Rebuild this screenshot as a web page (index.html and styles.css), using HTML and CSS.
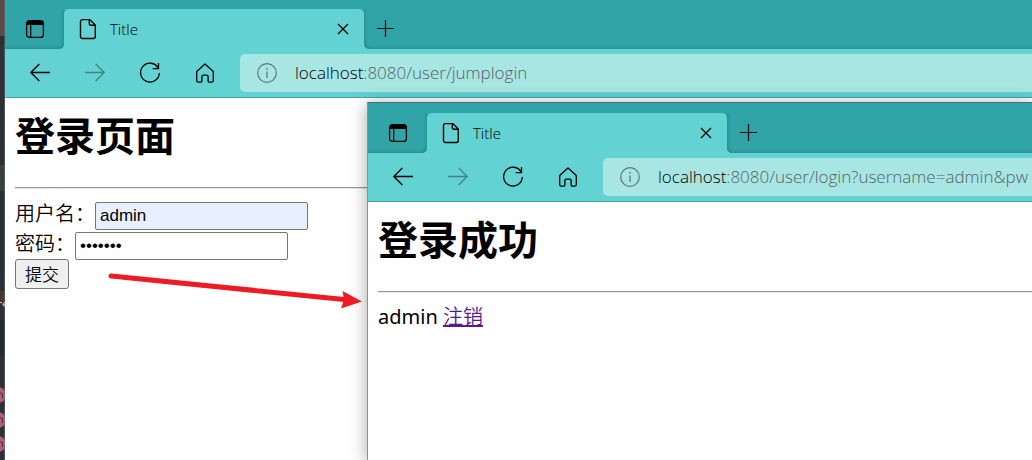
FILE: index.html
```html
<!DOCTYPE html>
<html lang="zh-CN">
<head>
<meta charset="utf-8">
<title>Title</title>
<link rel="stylesheet" href="styles.css">
</head>
<body>
<svg class="sprite" aria-hidden="true">
  <symbol id="i-panel" viewBox="0 0 20 20"><rect x="1.6" y="1.6" width="16.8" height="16.8" rx="3" fill="none" stroke="currentColor" stroke-width="1.3"/><path d="M1.5 6V4.5a3 3 0 0 1 3-3h11a3 3 0 0 1 3 3V6z" fill="currentColor"/><path d="M5.7 6v12.400" stroke="currentColor" stroke-width="1.200"/></symbol>
  <symbol id="i-file" viewBox="0 0 18 22"><path d="M3.500 1.600h7.200L16.300 7v11.500a2 2 0 0 1-2 2H3.500a2 2 0 0 1-2-2v-15a2 2 0 0 1 2-1.900zM10.300 1.800v3.800a1.600 1.600 0 0 0 1.600 1.600h4.200" fill="none" stroke="currentColor" stroke-width="1.400" stroke-linejoin="round"/></symbol>
  <symbol id="i-close" viewBox="0 0 12 12"><path d="M1 1l10 10M11 1L1 11" stroke="currentColor" stroke-width="1.300"/></symbol>
  <symbol id="i-plus" viewBox="0 0 18 18"><path d="M8.500 0v17M0 8.500h17" stroke="currentColor" stroke-width="1.200"/></symbol>
  <symbol id="i-back" viewBox="0 0 22 20"><path d="M21 9.500H2M10.300 1L1.800 9.500l8.500 8.500" fill="none" stroke="currentColor" stroke-width="1.300"/></symbol>
  <symbol id="i-forward" viewBox="0 0 22 20"><path d="M1 9.500h19M11.700 1l8.500 8.500-8.500 8.500" fill="none" stroke="currentColor" stroke-width="1.300"/></symbol>
  <symbol id="i-reload" viewBox="0 0 22 22"><path d="M19.200 6A9.400 9.400 0 1 0 20.400 11M19.500 1v5.700h-5.800" fill="none" stroke="currentColor" stroke-width="1.300"/></symbol>
  <symbol id="i-home" viewBox="0 0 20 22"><path d="M1.700 9.600L10 1.900l8.300 7.700v9a1.500 1.500 0 0 1-1.500 1.500h-2.700a1 1 0 0 1-1-1v-4.500a1.500 1.500 0 0 0-1.500-1.500H8.400a1.500 1.500 0 0 0-1.500 1.500v4.500a1 1 0 0 1-1 1H3.200a1.500 1.500 0 0 1-1.500-1.500z" fill="none" stroke="currentColor" stroke-width="1.300" stroke-linejoin="round"/></symbol>
  <symbol id="i-info" viewBox="0 0 20 20"><circle cx="10" cy="10" r="9.300" fill="none" stroke="currentColor" stroke-width="1.200"/><path d="M10 8.500v6.500M10 5v1.700" stroke="currentColor" stroke-width="1.300"/></symbol>
</svg>

<div class="desktop">
  <svg class="backdrop" width="5" height="460" aria-hidden="true">
    <path fill="#5a4a4c" d="M0 0h5v36H0z"/><path fill="#2d3036" d="M0 36h5v424H0z"/>
    <path fill="#3a3f3d" d="M0 165h5v26H0z"/><path fill="#2b2f3c" d="M0 191h5v88H0z"/>
    <path fill="#4a362d" d="M0 291h5v13H0z"/><path fill="#262930" d="M0 320h5v36H0z"/>
    <g fill="#b05c72"><circle cx="-2" cy="395" r="8"/><circle cx="-2" cy="420" r="8"/><circle cx="-2" cy="444" r="8"/></g>
    <path d="M0 393h1.500q1 0 1 1v4M0 418h1.500q1 0 1 1v4M0 442h1.500q1 0 1 1v4" fill="none" stroke="#49303c"/>
    <path d="M4.500 0v460" stroke="#69777a" opacity=".5"/>
    <path d="M0 302.500h2M5 302.500q-2 0-2 2t2 2M3 304.500h2" stroke="#b8c0c4" fill="none"/>
  </svg>

  <section class="window window-login">
    <header>
      <div class="tabs">
        <button class="panel" aria-label="标签操作"><svg width="20" height="20"><use href="#i-panel"/></svg></button>
        <div class="tab">
          <svg width="18" height="22"><use href="#i-file"/></svg>
          <span class="tab-title">Title</span>
          <button aria-label="关闭标签"><svg width="12" height="12"><use href="#i-close"/></svg></button>
        </div>
        <div class="strip"><button class="new-tab" aria-label="新标签"><svg width="18" height="18"><use href="#i-plus"/></svg></button></div>
      </div>
      <nav class="toolbar">
        <button aria-label="后退"><svg width="22" height="20"><use href="#i-back"/></svg></button>
        <button aria-label="前进" disabled><svg width="22" height="20"><use href="#i-forward"/></svg></button>
        <button aria-label="刷新"><svg width="22" height="22"><use href="#i-reload"/></svg></button>
        <button aria-label="主页"><svg width="20" height="22"><use href="#i-home"/></svg></button>
        <div class="address"><svg width="20" height="20"><use href="#i-info"/></svg><span class="url"><b>localhost</b>:8080/user/jumplogin</span></div>
      </nav>
    </header>
    <main class="page">
      <h1>登录页面</h1>
      <hr>
      <form>
        <div class="field"><label for="user">用户名：</label><input class="filled" id="user" type="text" value="admin"></div>
        <div class="field"><label for="pwd">密码：</label><input id="pwd" type="password" value="1234567"></div>
        <button class="submit" type="button">提交</button>
      </form>
    </main>
  </section>

  <section class="window window-success">
    <header>
      <div class="tabs">
        <button class="panel" aria-label="标签操作"><svg width="20" height="20"><use href="#i-panel"/></svg></button>
        <div class="tab">
          <svg width="18" height="22"><use href="#i-file"/></svg>
          <span class="tab-title">Title</span>
          <button aria-label="关闭标签"><svg width="12" height="12"><use href="#i-close"/></svg></button>
        </div>
        <div class="strip"><button class="new-tab" aria-label="新标签"><svg width="18" height="18"><use href="#i-plus"/></svg></button></div>
      </div>
      <nav class="toolbar">
        <button aria-label="后退"><svg width="22" height="20"><use href="#i-back"/></svg></button>
        <button aria-label="前进" disabled><svg width="22" height="20"><use href="#i-forward"/></svg></button>
        <button aria-label="刷新"><svg width="22" height="22"><use href="#i-reload"/></svg></button>
        <button aria-label="主页"><svg width="20" height="22"><use href="#i-home"/></svg></button>
        <div class="address"><svg width="20" height="20"><use href="#i-info"/></svg><span class="url"><b>localhost</b>:8080/user/login?username=admin&amp;pw</span></div>
      </nav>
    </header>
    <main class="page">
      <h1>登录成功</h1>
      <hr>
      <p>admin <a href="#">注销</a></p>
    </main>
  </section>

  <svg class="arrow" width="260" height="44" viewBox="0 0 260 44" aria-hidden="true">
    <path d="M6 9L239 32.500" stroke="#ed1c24" stroke-width="5" stroke-linecap="round"/>
    <path d="M237.500 24L257 34.500 236 41.500l3-9z" fill="#ed1c24"/>
  </svg>
</div>
</body>
</html>
```
FILE: styles.css
```css
* { box-sizing: border-box; }
body { margin: 0; font-family: "Noto Sans", "Noto Sans CJK SC", sans-serif; color: #000; }
.sprite { display: none; }
.desktop { position: relative; height: 100vh; overflow: hidden; background: #2d3036; }
.backdrop { position: absolute; left: 0; top: 0; }

.window { position: absolute; right: 0; bottom: 0; background: #fff; overflow: hidden; }
.window-login { left: 5px; top: -1px; }
.window-success {
  left: 367px; top: 102px;
  border: solid #8c9294; border-width: 1px 0 0 1px;
  border-top-color: #456f73;
  box-shadow: 0 2px 16px rgba(0, 0, 0, .35);
}

header { background: #62d2d2; border-bottom: 1px solid #45a3a5; }
header button {
  display: flex; align-items: center; justify-content: center;
  flex: none; padding: 0; border: 0; background: none; color: #000;
}
header button:disabled { color: #3d8587; }
svg { display: block; flex: none; }

.tabs {
  display: flex; height: 50px; padding-top: 10px;
  background: linear-gradient(#30a4a7 20px, #62d2d2 20px);
}
header .panel {
  width: 59px; background: #30a4a7;
  border-bottom-right-radius: 5px;
  box-shadow: inset -2px -2px 3px -1px #278c8f;
}
.tab {
  display: flex; align-items: center; width: 300px; padding: 0 15px;
  background: #62d2d2; border-radius: 5px 5px 0 0;
}
.tab-title { flex: 1; margin-left: 13px; font: 350 15px/20px "Open Sans", sans-serif; }
.strip {
  display: flex; flex: 1; background: #30a4a7;
  border-bottom-left-radius: 5px;
  box-shadow: inset 2px -2px 3px -1px #278c8f;
}
.new-tab { width: 44px; }

.toolbar { display: flex; align-items: center; height: 48px; padding-left: 7px; }
.toolbar > button { width: 55px; height: 40px; }
.address {
  display: flex; align-items: center; gap: 18px; flex: 1; min-width: 0;
  height: 38px; margin-left: 8px; padding-left: 17px; overflow: hidden;
  background: #a8e6e4; border-radius: 5px 0 0 5px; color: #60777a;
}
.url { font: 350 17px/24px "Open Sans", sans-serif; color: #566263; white-space: nowrap; }
.url b { font-weight: 350; color: #000; }

.page { padding: 10px 0 0 10px; font-size: 20px; line-height: 30px; font-weight: 350; }
h1 { margin: 0 0 23px; font-size: 40px; line-height: 56px; }
hr { margin: 0 0 12px; border: 0; border-top: 1px solid #999; border-bottom: 1px solid #e6e6e6; }
.field { display: flex; align-items: center; height: 30px; line-height: 26px; }
.field label { align-self: flex-start; }
.field input {
  width: 213px; height: 28px; padding: 0 4px;
  font: 17px "Liberation Sans", sans-serif; color: #000;
  background: #fff; border: 1px solid #767676; border-radius: 2px;
}
.field .filled { background: #e8f0fe; }
.submit {
  display: block; height: 30px; margin-top: -2px; padding: 0 9px;
  font: 350 17px/26px "Noto Sans CJK SC", sans-serif; color: #000;
  background: #efefef; border: 1px solid #767676; border-radius: 3px;
}
form, p { margin: 0; }
p { line-height: 24px; font-weight: 400; }
a { color: #551a8b; font-weight: 350; }
.arrow { position: absolute; left: 105px; top: 267px; }
```
